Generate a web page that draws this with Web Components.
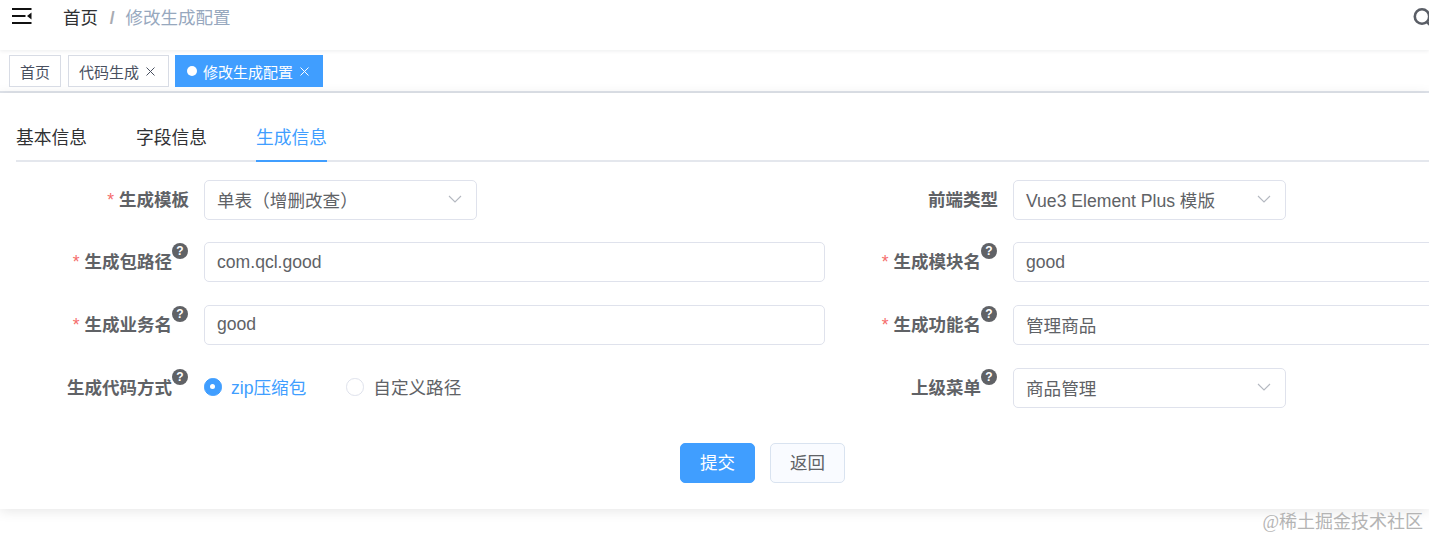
<!DOCTYPE html>
<html lang="zh">
<head>
<meta charset="utf-8">
<title>修改生成配置</title>
<style>
  html, body { margin: 0; height: 100%; overflow: hidden; background: #fff; }
  body { font-family: "Liberation Sans", "Noto Sans CJK SC", sans-serif; }
</style>
</head>
<body>
<app-shell>
  <app-navbar></app-navbar>
  <tag-bar>
    <app-tag>首页</app-tag>
    <app-tag closable>代码生成</app-tag>
    <app-tag closable active>修改生成配置</app-tag>
  </tag-bar>
  <gen-card>
    <tab-bar>
      <tab-item>基本信息</tab-item>
      <tab-item>字段信息</tab-item>
      <tab-item active>生成信息</tab-item>
    </tab-bar>
    <gen-form>
      <form-item label="生成模板" required><app-select>单表（增删改查）</app-select></form-item>
      <form-item label="前端类型"><app-select>Vue3 Element Plus 模版</app-select></form-item>
      <form-item label="生成包路径" required help><app-input>com.qcl.good</app-input></form-item>
      <form-item label="生成模块名" required help><app-input>good</app-input></form-item>
      <form-item label="生成业务名" required help><app-input tight>good</app-input></form-item>
      <form-item label="生成功能名" required help><app-input cjk>管理商品</app-input></form-item>
      <form-item label="生成代码方式" help>
        <radio-group>
          <app-radio checked>zip压缩包</app-radio>
          <app-radio>自定义路径</app-radio>
        </radio-group>
      </form-item>
      <form-item label="上级菜单" help><app-select>商品管理</app-select></form-item>
    </gen-form>
    <form-actions>
      <app-button primary>提交</app-button>
      <app-button>返回</app-button>
    </form-actions>
  </gen-card>
  <span slot="mark">@稀土掘金技术社区</span>
</app-shell>

<script>
function define(name, css, html, init) {
  customElements.define(name, class extends HTMLElement {
    connectedCallback() {
      if (this.shadowRoot) return;
      this.attachShadow({ mode: 'open' });
      this.shadowRoot.innerHTML = `<style>${css}</style>${typeof html === 'function' ? html(this) : html}`;
      if (init) init(this);
    }
  });
}

define('app-shell', `
  :host { display: block; position: relative; height: 538px; overflow: hidden; }
  .mark { position: absolute; right: 6px; top: 510px; font: 18px/24px "Liberation Serif", "Noto Sans CJK SC", serif; color: #b4b4b4; }
`, `<slot></slot><div class="mark"><slot name="mark"></slot></div>`);

define('app-navbar', `
  :host { display: flex; align-items: flex-start; height: 50px; position: relative; overflow: hidden; background: #fff; box-shadow: 0 1px 4px rgba(0,21,41,.08); }
  .menu { display: block; margin: 7px 0 0 12px; flex: none; }
  .crumb { margin: 5px 0 0 31px; font-size: 17.5px; line-height: 26px; color: #303133; flex: 1; }
  .sep { color: #a8abb2; font-weight: 700; margin: 0 6px 0 7px; }
  .cur { color: #97a8be; }
  .search { display: block; flex: none; margin-top: 7px; margin-right: -14px; }
`, `
  <svg class="menu" width="20" height="18" viewBox="0 0 20 18">
    <path d="M0 2H19.5M0 9H13.5M0 16H19.5" stroke="#111" stroke-width="2" fill="none"/>
    <path d="M19.5 5.5V12.5L15 9Z" fill="#111"/>
  </svg>
  <div class="crumb">首页<span class="sep"> / </span><span class="cur">修改生成配置</span></div>
  <svg class="search" width="30" height="22" viewBox="0 0 30 22">
    <circle cx="9" cy="9.5" r="7.2" stroke="#5a5e66" stroke-width="2.6" fill="none"/>
    <path d="M14 15L19 20" stroke="#5a5e66" stroke-width="2.6"/>
  </svg>
`);

define('tag-bar', `
  :host { display: flex; align-items: flex-start; gap: 7px; box-sizing: border-box; height: 43px; padding: 5px 0 0 9px; background: #fff; border-bottom: 2px solid #dfe3ea; }
  ::slotted(:last-child) { margin-left: -1px; }
`, `<slot></slot>`);

define('app-tag', `
  :host { display: inline-flex; align-items: center; box-sizing: border-box; height: 32px; padding: 0 10px; border: 1px solid #d8dce5; font-size: 15px; color: #495060; background: #fff; }
  :host([closable]) { padding-right: 12px; }
  :host([active]) { background: #409eff; border-color: #409eff; color: #fff; padding: 0 12px 0 11px; }
  .dot { width: 10px; height: 10px; border-radius: 50%; background: #fff; margin-right: 6px; }
  svg { display: block; margin-left: 6px; }
`, el => `
  ${el.hasAttribute('active') ? '<span class="dot"></span>' : ''}
  <slot></slot>
  ${el.hasAttribute('closable') ? '<svg width="11" height="11" viewBox="0 0 11 11"><path d="M1.5 1.5L9.5 9.5M9.5 1.5L1.5 9.5" stroke="currentColor" stroke-width="1" fill="none"/></svg>' : ''}
`);

define('gen-card', `
  :host { display: block; box-sizing: border-box; height: 416px; padding: 18px 0 0 16px; background: #fff; box-shadow: 0 2px 12px rgba(0,0,0,.1); }
`, `<slot></slot>`);

define('tab-bar', `
  :host { display: flex; gap: 48.8px; height: 51px; box-shadow: inset 0 -2px 0 #e4e7ed; }
`, `<slot></slot>`);

define('tab-item', `
  :host { display: block; box-sizing: border-box; height: 51px; font-size: 17.8px; line-height: 55px; color: #303133; }
  :host([active]) { color: #409eff; border-bottom: 2px solid #409eff; }
`, `<slot></slot>`);

define('gen-form', `
  :host { display: grid; grid-template-columns: 809px 809px; row-gap: 22.8px; margin-top: 17.6px; }
`, `<slot></slot>`);

define('form-item', `
  :host { display: grid; grid-template-columns: 173px 621px; column-gap: 15px; height: 40px; }
  .label { display: flex; justify-content: flex-end; align-items: flex-start; font-size: 17.5px; line-height: 40px; font-weight: 700; color: #606266; white-space: nowrap; }
  .star { color: #f56c6c; font-weight: 400; margin-right: 5px; }
  .help { flex: none; width: 16px; height: 16px; margin-top: 1px; border-radius: 50%; background: #606266; color: #fff; font-size: 12px; line-height: 16px; text-align: center; }
  .has-help { margin-right: 1px; }
  .body { min-width: 0; display: flex; align-items: center; }
`, el => `
  <div class="label${el.hasAttribute('help') ? ' has-help' : ''}">
    ${el.hasAttribute('required') ? '<span class="star">*</span>' : ''}
    <span>${el.getAttribute('label')}</span>
    ${el.hasAttribute('help') ? '<span class="help">?</span>' : ''}
  </div>
  <div class="body"><slot></slot></div>
`);

define('app-input', `
  :host { display: block; flex: 1; box-sizing: border-box; height: 40px; padding: 0 12px; border: 1.5px solid #dfe2ec; border-radius: 5px; background: #fff; font-size: 17.6px; line-height: 38px; color: #606266; }
  :host([tight]) { line-height: 36px; }
  :host([cjk]) { line-height: 41px; }
`, `<slot></slot>`);

define('app-select', `
  :host { display: flex; align-items: center; justify-content: space-between; box-sizing: border-box; width: 273px; height: 40px; padding: 0 14px 1px 12px; border: 1.5px solid #dfe2ec; border-radius: 5px; background: #fff; font-size: 17.6px; color: #606266; white-space: nowrap; }
  svg { display: block; flex: none; }
`, `<span><slot></slot></span><svg width="14" height="8" viewBox="0 0 14 8"><path d="M1 1L7 7L13 1" stroke="#b4b8c0" stroke-width="1.1" fill="none"/></svg>`);

define('radio-group', `
  :host { display: flex; align-items: center; gap: 40px; margin-top: -2px; }
`, `<slot></slot>`);

define('app-radio', `
  :host { display: inline-flex; align-items: center; gap: 9.5px; font-size: 17.6px; color: #606266; }
  :host([checked]) { color: #409eff; }
  .dot { box-sizing: border-box; width: 17.5px; height: 17.5px; border-radius: 50%; border: 1.5px solid #dfe2ec; background: #fff; display: flex; align-items: center; justify-content: center; }
  :host([checked]) .dot { background: #409eff; border-color: #409eff; }
  :host([checked]) .dot::after { content: ""; width: 5px; height: 5px; border-radius: 50%; background: #fff; }
`, `<span class="dot"></span><span><slot></slot></span>`);

define('form-actions', `
  :host { display: flex; gap: 15px; margin: 35px 0 0 664px; }
`, `<slot></slot>`);

define('app-button', `
  :host { display: inline-flex; align-items: center; justify-content: center; box-sizing: border-box; width: 75px; height: 40px; padding-bottom: 2px; border: 1.5px solid #d9e3f0; border-radius: 5px; background: #f9fbff; font-size: 17.5px; color: #606266; }
  :host([primary]) { background: #409eff; border-color: #409eff; color: #fff; }
`, `<slot></slot>`);
</script>
</body>
</html>
